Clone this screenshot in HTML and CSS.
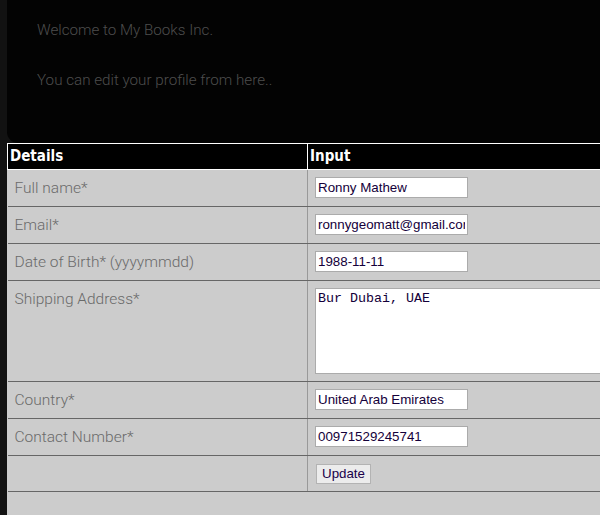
FILE: index.html
```html
<!DOCTYPE html>
<html>
<head>
<meta charset="utf-8">
<title>My Books Inc. - Profile</title>
<link rel="stylesheet" href="styles.css">
</head>
<body>
<div class="page">
  <div class="intro">
    <p class="intro-line">Welcome to My Books Inc.</p>
    <p class="intro-line">You can edit your profile from here..</p>
  </div>
  <div class="content">
    <table class="profile">
      <thead>
        <tr>
          <th class="col-details">Details</th>
          <th class="col-input">Input</th>
        </tr>
      </thead>
      <tbody>
        <tr>
          <td class="label">Full name*</td>
          <td class="field"><input class="text-input" type="text" value="Ronny Mathew"></td>
        </tr>
        <tr>
          <td class="label">Email*</td>
          <td class="field"><input class="text-input" type="text" value="ronnygeomatt@gmail.com"></td>
        </tr>
        <tr>
          <td class="label">Date of Birth* (yyyymmdd)</td>
          <td class="field"><input class="text-input" type="text" value="1988-11-11"></td>
        </tr>
        <tr>
          <td class="label">Shipping Address*</td>
          <td class="field"><textarea class="address">Bur Dubai, UAE</textarea></td>
        </tr>
        <tr>
          <td class="label">Country*</td>
          <td class="field"><input class="text-input" type="text" value="United Arab Emirates"></td>
        </tr>
        <tr>
          <td class="label">Contact Number*</td>
          <td class="field"><input class="text-input" type="text" value="00971529245741"></td>
        </tr>
        <tr>
          <td class="label"></td>
          <td class="field"><button class="update-btn" type="button">Update</button></td>
        </tr>
      </tbody>
    </table>
  </div>
</div>
</body>
</html>
```

FILE: styles.css
```css
html, body {
  margin: 0;
  padding: 0;
  overflow: hidden;
}

body {
  background: #121212;
  width: 600px;
  height: 515px;
}

.page {
  margin-left: 7px;
  width: 720px;
  height: 515px;
  display: flex;
  flex-direction: column;
}

.intro {
  background: #030303;
  height: 143px;
  box-sizing: border-box;
  border-bottom-left-radius: 11px;
  padding: 20px 0 0 30px;
  flex: none;
}

.intro-line {
  margin: 0 0 30px 0;
  font-family: Roboto, "Liberation Sans", sans-serif;
  font-weight: 300;
  font-size: 15.2px;
  line-height: 20px;
  color: #4d4d4d;
}

.content {
  background: #cccccc;
  flex: 1;
}

.profile {
  border-collapse: collapse;
  width: 720px;
}

.profile th {
  background: #000;
  color: #fff;
  border: 1px solid #fff;
  text-align: left;
  font-family: "DejaVu Sans Condensed", "DejaVu Sans", sans-serif;
  font-weight: bold;
  font-size: 15px;
  line-height: 25px;
  padding: 0 2px;
}

.profile .col-details {
  width: 295px;
}

.profile td {
  border-bottom: 1px solid #666;
  padding: 7px;
  vertical-align: top;
}

.profile td.label {
  border-right: 1px solid #999;
  font-family: Roboto, "Liberation Sans", sans-serif;
  font-weight: 300;
  font-size: 15.5px;
  line-height: 22px;
  color: #6a6a6a;
  width: 285px;
}

.text-input {
  display: block;
  box-sizing: border-box;
  width: 153px;
  height: 21px;
  margin: 0;
  padding: 1px 2px;
  border: 1px solid #ababab;
  background: #fff;
  font-family: "Liberation Sans", Arial, sans-serif;
  font-size: 13.33px;
  color: #14003a;
  outline: none;
}

.address {
  display: block;
  box-sizing: border-box;
  width: 330px;
  height: 86px;
  margin: 0;
  padding: 2px;
  border: 1px solid #ababab;
  background: #fff;
  font-family: "Liberation Mono", "Courier New", monospace;
  font-size: 13.33px;
  color: #14003a;
  resize: none;
  outline: none;
}

.update-btn {
  display: block;
  margin: 1px 0 0 1px;
  box-sizing: border-box;
  width: 55px;
  height: 20px;
  padding: 0;
  border: 1px solid #b3b3b3;
  border-radius: 0;
  background: #ececec;
  font-family: "Liberation Sans", Arial, sans-serif;
  font-size: 13.33px;
  line-height: 18px;
  color: #1a004a;
}
```
